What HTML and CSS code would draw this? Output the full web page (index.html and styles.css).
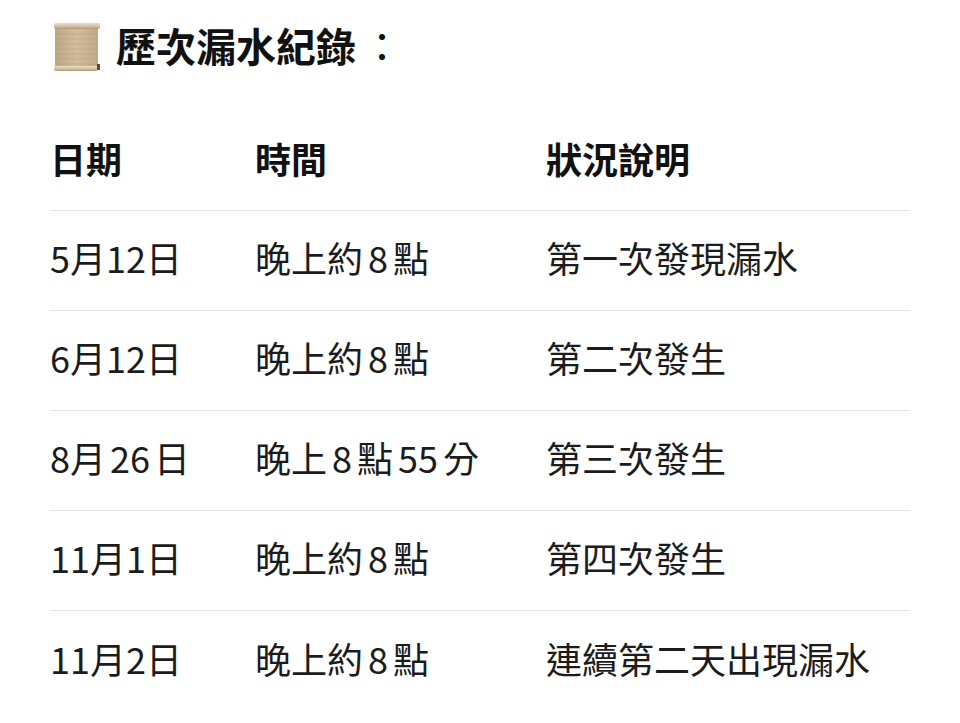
FILE: index.html
```html
<!DOCTYPE html>
<html lang="zh-Hant">
<head>
<meta charset="utf-8">
<link rel="stylesheet" href="styles.css">
</head>
<body>
<div class="page">
  <h1 class="title">
    <svg class="scroll" width="48" height="52" viewBox="0 0 48 52">
      <defs>
        <linearGradient id="body" x1="0" x2="1" y1="0" y2="0">
          <stop offset="0" stop-color="#bda786"/>
          <stop offset="0.5" stop-color="#d2bd9c"/>
          <stop offset="1" stop-color="#c1aa88"/>
        </linearGradient>
        <linearGradient id="roll" x1="0" x2="0" y1="0" y2="1">
          <stop offset="0" stop-color="#e8ddc8"/>
          <stop offset="0.6" stop-color="#d1bea0"/>
          <stop offset="1" stop-color="#ad9574"/>
        </linearGradient>
      </defs>
      <rect x="2" y="5" width="43" height="41" fill="url(#body)"/>
      <g stroke="#a8906d" stroke-width="0.6" opacity="0.5">
        <line x1="3" y1="12" x2="44" y2="12"/>
        <line x1="3" y1="17" x2="44" y2="17"/>
        <line x1="3" y1="22" x2="44" y2="22"/>
        <line x1="3" y1="27" x2="44" y2="27"/>
        <line x1="3" y1="32" x2="44" y2="32"/>
        <line x1="3" y1="37" x2="44" y2="37"/>
        <line x1="3" y1="42" x2="44" y2="42"/>
      </g>
      <rect x="1" y="1" width="46" height="6" rx="2" fill="url(#roll)"/>
      <rect x="1" y="44" width="44" height="5" rx="2" fill="url(#roll)"/>
      <rect x="44" y="42" width="3" height="6" fill="#5a4a3a"/>
    </svg>
    <span class="title-text">歷次漏水紀錄<span class="colon">：</span></span>
  </h1>
  <div class="table">
    <div class="row head">
      <div class="c1">日期</div>
      <div class="c2">時間</div>
      <div class="c3">狀況說明</div>
    </div>
    <div class="row">
      <div class="c1">5月12日</div>
      <div class="c2">晚上約<span class="n">8</span>點</div>
      <div class="c3">第一次發現漏水</div>
    </div>
    <div class="row">
      <div class="c1">6月12日</div>
      <div class="c2">晚上約<span class="n">8</span>點</div>
      <div class="c3">第二次發生</div>
    </div>
    <div class="row">
      <div class="c1">8月<span class="d">26</span>日</div>
      <div class="c2">晚上<span class="n">8</span>點<span class="n">55</span>分</div>
      <div class="c3">第三次發生</div>
    </div>
    <div class="row">
      <div class="c1">11月1日</div>
      <div class="c2">晚上約<span class="n">8</span>點</div>
      <div class="c3">第四次發生</div>
    </div>
    <div class="row last">
      <div class="c1">11月2日</div>
      <div class="c2">晚上約<span class="n">8</span>點</div>
      <div class="c3">連續第二天出現漏水</div>
    </div>
  </div>
</div>
</body>
</html>
```
FILE: styles.css
```css
html, body {
  margin: 0;
  padding: 0;
  background: #ffffff;
}
body {
  font-family: "Noto Sans CJK TC", "Noto Sans CJK SC", "Noto Sans", sans-serif;
  color: #1c1c1c;
}
.page {
  width: 860px;
  padding-left: 50px;
}
.title {
  margin: 0;
  height: 96px;
  display: flex;
  align-items: center;
  gap: 15px;
  padding-left: 3px;
  font-size: 40px;
  font-weight: 700;
  color: #111;
  line-height: 1;
}
.title-text {
  padding-bottom: 6px;
}
.colon {
  margin-left: 6px;
  font-weight: 400;
}
.scroll {
  display: block;
  flex: none;
}
.table {
  margin-top: 15px;
  font-size: 36px;
  line-height: 1;
}
.row {
  display: grid;
  grid-template-columns: 205px 291px 1fr;
  height: 100px;
  align-items: center;
  padding-bottom: 7px;
  border-bottom: 1px solid #e6e6e6;
  box-sizing: border-box;
}
.row.last {
  border-bottom: none;
}
.head {
  font-weight: 700;
  color: #111;
  padding-bottom: 5px;
}
.c1, .c2, .c3 {
  white-space: nowrap;
}
.n {
  margin: 0 5px;
}
.d {
  margin: 0 4px;
}
```
